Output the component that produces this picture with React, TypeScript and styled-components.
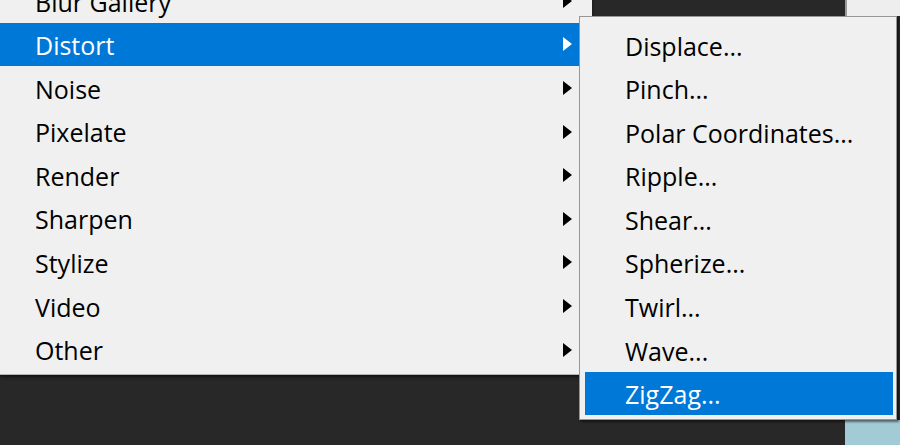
import React from "react";
import styled, { createGlobalStyle } from "styled-components";

const Global = createGlobalStyle`
  html, body { margin: 0; padding: 0; background: #282828; }
  body { font-family: "Open Sans", "Noto Sans", sans-serif; }
`;

const Stage = styled.div`
  position: relative;
  width: 900px;
  height: 445px;
  overflow: hidden;
  background: #282828;
  display: grid;
  grid-template-columns: 845px 1fr;
`;

const DarkArea = styled.div`
  background: #282828;
`;

const SideStrip = styled.div`
  display: flex;
  flex-direction: column;
`;

const SideTop = styled.div`
  height: 16px;
  background: #eeeeee;
  border-left: 2px solid #9a9a9a;
`;

const SideMiddle = styled.div`
  flex: 1;
  background: #282828;
`;

const SideBottom = styled.div`
  height: 25px;
  background: #a3cbd5;
`;

const MenuLayer = styled.div`
  position: absolute;
  inset: 0;
  display: flex;
  align-items: flex-start;
`;

const MainMenu = styled.div`
  width: 592px;
  flex: none;
  margin-top: -24px;
  padding: 3px 0 3px;
  background: #f0f0f0;
  border-bottom: 1px solid #b5b5b5;
  box-shadow: 0 2px 3px rgba(0, 0, 0, 0.55);
`;

const SubMenu = styled.div`
  width: 318px;
  flex: none;
  margin-left: -13px;
  margin-top: 16px;
  padding: 6px 3px 4px 5px;
  box-sizing: border-box;
  background: #f0f0f0;
  border: 1px solid #979797;
  box-shadow: 2px 2px 2px rgba(0, 0, 0, 0.5);
  position: relative;
`;

const Row = styled.div<{ $active?: boolean; $indent: number }>`
  height: 43.6px;
  display: flex;
  align-items: center;
  padding-left: ${(p) => p.$indent}px;
  padding-right: 20px;
  background: ${(p) => (p.$active ? "#0078d7" : "transparent")};
  color: ${(p) => (p.$active ? "#ffffff" : "#000000")};
  font-size: 25px;
  line-height: 43.6px;
  white-space: nowrap;
`;

const Label = styled.span`
  flex: 1;
  padding-top: 3px;
`;

const Arrow = styled.svg`
  width: 9px;
  height: 14px;
  flex: none;
`;

type Item = { label: string; active?: boolean };

const mainItems: Item[] = [
  { label: "Blur Gallery" },
  { label: "Distort", active: true },
  { label: "Noise" },
  { label: "Pixelate" },
  { label: "Render" },
  { label: "Sharpen" },
  { label: "Stylize" },
  { label: "Video" },
  { label: "Other" },
];

const subItems: Item[] = [
  { label: "Displace..." },
  { label: "Pinch..." },
  { label: "Polar Coordinates..." },
  { label: "Ripple..." },
  { label: "Shear..." },
  { label: "Spherize..." },
  { label: "Twirl..." },
  { label: "Wave..." },
  { label: "ZigZag...", active: true },
];

export default function App() {
  return (
    <>
      <Global />
      <Stage>
        <DarkArea />
        <SideStrip>
          <SideTop />
          <SideMiddle />
          <SideBottom />
        </SideStrip>
        <MenuLayer>
          <MainMenu>
            {mainItems.map((it) => (
              <Row key={it.label} $active={it.active} $indent={35}>
                <Label>{it.label}</Label>
                <Arrow viewBox="0 0 9 14">
                  <polygon points="0,0 9,7 0,14" fill={it.active ? "#ffffff" : "#000000"} />
                </Arrow>
              </Row>
            ))}
          </MainMenu>
          <SubMenu>
            {subItems.map((it) => (
              <Row key={it.label} $active={it.active} $indent={40}>
                <Label>{it.label}</Label>
              </Row>
            ))}
          </SubMenu>
        </MenuLayer>
      </Stage>
    </>
  );
}
